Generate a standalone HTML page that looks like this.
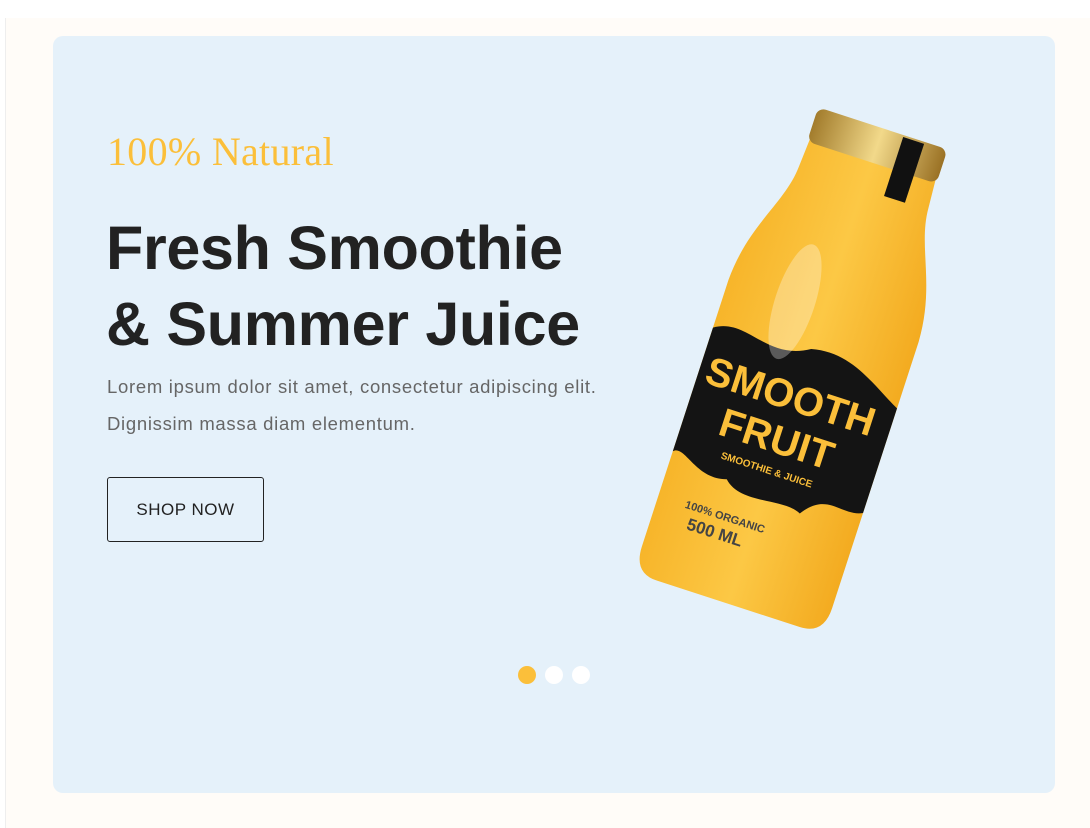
<!DOCTYPE html>
<html><head><style>
html,body{margin:0;padding:0;width:1090px;height:828px;overflow:hidden;background:#fff;font-family:"Liberation Sans",sans-serif}
.bg{position:absolute;left:5px;top:18px;width:1085px;height:810px;background:#fffcf8;border-left:1px solid #eee}
.card{position:absolute;left:53px;top:36px;width:1002px;height:757px;background:#e5f1fa;border-radius:10px}
.nat{position:absolute;left:107px;top:128px;font-family:"Liberation Serif",serif;font-size:40px;color:#fbbf3a;letter-spacing:.3px}
h1{position:absolute;left:106px;top:210px;margin:0;font-size:61px;line-height:76px;font-weight:bold;color:#222;letter-spacing:-.3px}
.p{position:absolute;left:107px;top:368px;font-size:18.5px;line-height:37px;color:#666;letter-spacing:.7px}
.btn{position:absolute;left:107px;top:477px;width:155px;height:63px;border:1px solid #222;border-radius:3px;font-size:17px;color:#222;text-align:center;line-height:63px;letter-spacing:.5px}
.dot{position:absolute;top:666px;width:18px;height:18px;border-radius:50%;background:#fff}
</style></head><body>
<div class="bg"></div>
<div class="card"></div>
<div class="nat">100% Natural</div>
<h1>Fresh Smoothie<br>&amp; Summer Juice</h1>
<div class="p">Lorem ipsum dolor sit amet, consectetur adipiscing elit.<br>Dignissim massa diam elementum.</div>
<div class="btn">SHOP NOW</div>
<div class="dot" style="left:518px;background:#fbbf3a"></div>
<div class="dot" style="left:545px"></div>
<div class="dot" style="left:572px"></div>
<svg style="position:absolute;left:0;top:0" width="1090" height="828">
<defs><linearGradient id="g" x1="0" x2="1"><stop offset="0" stop-color="#f7b52a"/><stop offset=".5" stop-color="#fcc845"/><stop offset="1" stop-color="#f3ab20"/></linearGradient>
<linearGradient id="c" x1="0" x2="1"><stop offset="0" stop-color="#a27c2c"/><stop offset=".5" stop-color="#f2d98a"/><stop offset="1" stop-color="#9a7124"/></linearGradient></defs>
<g transform="translate(805,368) rotate(18)">
<path d="M-66,-220 L66,-220 L68,-190 C70,-150 98,-120 100,-60 L100,220 Q100,248 75,248 L-75,248 Q-100,248 -100,220 L-100,-60 C-98,-120 -70,-150 -68,-190 Z" fill="url(#g)"/>
<rect x="-68" y="-252" width="136" height="36" rx="8" fill="url(#c)"/>
<rect x="22" y="-250" width="22" height="62" fill="#111"/>
<path d="M-100,-10 C-70,-30 -40,5 0,-20 C40,-30 70,-5 100,10 L100,120 C80,130 60,110 40,140 C20,130 -20,150 -40,130 C-70,140 -90,110 -100,120 Z" fill="#141414"/>
<text x="-5" y="45" font-size="40" font-weight="bold" fill="#fbbf3a" text-anchor="middle">SMOOTH</text>
<text x="-5" y="90" font-size="40" font-weight="bold" fill="#fbbf3a" text-anchor="middle">FRUIT</text>
<text x="-5" y="112" font-size="10" font-weight="bold" fill="#fbbf3a" text-anchor="middle">SMOOTHIE &amp; JUICE</text>
<text x="-30" y="170" font-size="11" font-weight="bold" fill="#444" text-anchor="middle">100% ORGANIC</text>
<text x="-35" y="190" font-size="17" font-weight="bold" fill="#444" text-anchor="middle">500 ML</text>
<ellipse cx="-30" cy="-60" rx="20" ry="60" fill="#fff" opacity=".3"/>
</g></svg>
</body></html>
